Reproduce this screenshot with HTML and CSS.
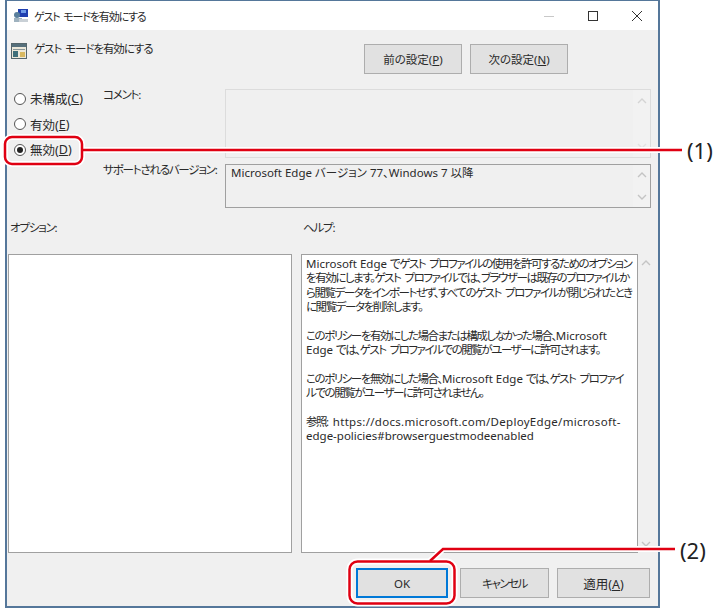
FILE: index.html
```html
<!DOCTYPE html>
<html lang="ja">
<head>
    <meta charset="UTF-8">
    <title>ゲスト モードを有効にする</title>
    <link rel="stylesheet" href="styles.css">
</head>
<body>

<div class="window">
    <div class="titlebar">
        <svg class="title-icon" width="16" height="16" viewBox="0 0 16 16">
            <rect x="5" y="1" width="10" height="8" fill="#1f3fb0"/>
            <rect x="8" y="2" width="5" height="3" fill="#6f9be8"/>
            <circle cx="4" cy="7" r="3" fill="#5a7f9c"/>
            <rect x="1" y="10" width="8" height="4" fill="#9fb2bf"/>
            <rect x="6" y="11" width="9" height="3" fill="#c9d0d6"/>
        </svg>
        <span class="title-text">ゲスト モードを有効にする</span>
        <div class="window-controls">
            <svg class="ctl-min" width="10" height="10" viewBox="0 0 10 10"><path d="M0 5.5h10" stroke="#c8c8c8" fill="none"/></svg>
            <svg class="ctl-max" width="10" height="10" viewBox="0 0 10 10"><rect x=".5" y=".5" width="9" height="9" stroke="#333" fill="none"/></svg>
            <svg class="ctl-close" width="10" height="10" viewBox="0 0 10 10"><path d="M0 0l10 10M10 0L0 10" stroke="#333" fill="none"/></svg>
        </div>
    </div>

    <div class="content">
        <div class="header-row">
            <svg class="policy-icon" width="16" height="16" viewBox="0 0 16 16">
                <rect x=".5" y=".5" width="15" height="15" fill="#ece8da" stroke="#55666c"/>
                <rect x="1" y="1" width="14" height="3" fill="#56707c"/>
                <rect x="2" y="6" width="12" height="1" fill="#8a979a"/>
                <rect x="2" y="8" width="5" height="6" fill="#3f6f7a"/>
                <rect x="9" y="9" width="5" height="5" fill="#d8b860"/>
            </svg>
            <span class="policy-name">ゲスト モードを有効にする</span>
            <div class="nav-buttons">
                <button class="btn btn-nav">前の設定(<u>P</u>)</button>
                <button class="btn btn-nav">次の設定(<u>N</u>)</button>
            </div>
        </div>

        <div class="settings">
            <div class="radios">
                <label class="radio"><span class="radio-dot"></span>未構成(<u>C</u>)</label>
                <label class="radio"><span class="radio-dot"></span>有効(<u>E</u>)</label>
                <label class="radio"><span class="radio-dot checked"></span>無効(<u>D</u>)</label>
            </div>
            <div class="field-label">コメント:</div>
            <div class="box box-comment">
                <div class="scroll">
                    <svg width="10" height="6" viewBox="0 0 10 6"><path d="M1 5l4-4 4 4" stroke="#d4d4d4" stroke-width="1.4" fill="none"/></svg>
                    <svg width="10" height="6" viewBox="0 0 10 6"><path d="M1 1l4 4 4-4" stroke="#e2e2e2" stroke-width="1.4" fill="none"/></svg>
                </div>
            </div>
            <div class="field-label">サポートされるバージョン:</div>
            <div class="box box-support">
                <span class="support-text">Microsoft Edge バージョン 77、Windows 7 以降</span>
                <div class="scroll scroll-short">
                    <svg width="10" height="6" viewBox="0 0 10 6"><path d="M1 5l4-4 4 4" stroke="#c4c4c4" stroke-width="1.4" fill="none"/></svg>
                    <svg width="10" height="6" viewBox="0 0 10 6"><path d="M1 1l4 4 4-4" stroke="#c4c4c4" stroke-width="1.4" fill="none"/></svg>
                </div>
            </div>
        </div>

        <div class="pane-labels">
            <div class="pane-label-left">オプション:</div>
            <div>ヘルプ:</div>
        </div>

        <div class="panes">
            <div class="pane-options"></div>
            <div class="pane-help">
                <div class="help-text">
                    <span class="en">Microsoft Edge </span>でゲスト プロファイルの使用を許可するためのオプション<br>
                    を有効にします。ゲスト プロファイルでは、ブラウザーは既存のプロファイルか<br>
                    ら閲覧データをインポートせず、すべてのゲスト プロファイルが閉じられたとき<br>
                    に閲覧データを削除します。<br>
                    <br>
                    このポリシーを有効にした場合または構成しなかった場合、<span class="en">Microsoft</span><br>
                    <span class="en">Edge </span>では、ゲスト プロファイルでの閲覧がユーザーに許可されます。<br>
                    <br>
                    このポリシーを無効にした場合、<span class="en">Microsoft Edge </span>では、ゲスト プロファイ<br>
                    ルでの閲覧がユーザーに許可されません。<br>
                    <br>
                    参照<span class="en url">: https://docs.microsoft.com/DeployEdge/microsoft-</span><br>
                    <span class="en">edge-policies#browserguestmodeenabled</span>
                </div>
                <div class="scroll scroll-help">
                    <svg width="10" height="6" viewBox="0 0 10 6"><path d="M1 5l4-4 4 4" stroke="#c4c4c4" stroke-width="1.4" fill="none"/></svg>
                    <svg width="10" height="6" viewBox="0 0 10 6"><path d="M1 1l4 4 4-4" stroke="#c4c4c4" stroke-width="1.4" fill="none"/></svg>
                </div>
            </div>
        </div>

        <div class="footer">
            <button class="btn btn-ok">OK</button>
            <button class="btn btn-cancel">キャンセル</button>
            <button class="btn btn-apply">適用(<u>A</u>)</button>
        </div>
    </div>
</div>

<!-- red callouts over the dialog -->
<svg class="callouts" width="717" height="609" viewBox="0 0 717 609">
    <g fill="none" stroke="#fff" stroke-width="6">
        <rect x="5" y="137" width="77" height="27" rx="7"/>
        <path d="M82 150H682"/>
        <rect x="349.5" y="561.5" width="105" height="42" rx="8"/>
        <path d="M430 561L443 549H675"/>
    </g>
    <g fill="none" stroke="#e00012" stroke-width="2.5">
        <rect x="5" y="137" width="77" height="27" rx="7"/>
        <path d="M82 150H682"/>
        <rect x="349.5" y="561.5" width="105" height="42" rx="8"/>
        <path d="M430 561L443 549H675"/>
    </g>
</svg>
<div class="callout-label label-1">(1)</div>
<div class="callout-label label-2">(2)</div>

</body>
</html>
```

FILE: styles.css
```css
body {
    margin: 0;
    padding-left: 5px;
    background: #fff;
    font-family: "Noto Sans", "Noto Sans CJK JP", sans-serif;
    font-size: 11.5px;
    font-feature-settings: "palt";
    color: #2a2a2a;
}
.window {
    width: 655px;
    height: 608px;
    box-sizing: border-box;
    border: 2px solid #55779a;
    border-top-width: 1px;
    background: #f0f0f0;
    display: flex;
    flex-direction: column;
    position: relative;
}
.titlebar {
    height: 29px;
    background: #fff;
    display: flex;
    align-items: center;
    padding-left: 6px;
}
.title-text {
    margin-left: 5px;
    font-size: 11px;
    letter-spacing: -1.15px;
    word-spacing: 2px;
}
.window-controls {
    margin-left: auto;
    display: flex;
    align-items: center;
    gap: 34px;
    padding-right: 16px;
}
.content {
    flex: 1;
    padding: 14px 7px 0 1px;
}
.header-row {
    display: flex;
    align-items: flex-start;
    height: 30px;
}
.policy-icon {
    margin: -1px 0 0 3px;
}
.policy-name {
    margin-left: 7px;
    margin-top: -1px;
    line-height: 12px;
    letter-spacing: -1.05px;
    word-spacing: 2px;
}
.nav-buttons {
    margin-left: auto;
    margin-right: 83px;
    display: flex;
    gap: 8px;
}
.btn {
    font: inherit;
    font-feature-settings: inherit;
    color: inherit;
    background: #e1e1e1;
    border: 1px solid #adadad;
    padding: 0;
    height: 30px;
}
.btn-nav {
    width: 98px;
}
.settings {
    margin-top: 15px;
    display: grid;
    grid-template-columns: 95px 122px 426px;
    grid-template-rows: 69px 44px;
    row-gap: 6px;
}
.radios {
    grid-row: 1 / 3;
    margin-top: -3px;
    padding-left: 6px;
    display: flex;
    flex-direction: column;
    font-size: 12.5px;
}
.radio {
    display: flex;
    align-items: center;
    height: 25.5px;
}
.radio-dot {
    width: 12px;
    height: 12px;
    box-sizing: border-box;
    border: 1px solid #555;
    border-radius: 50%;
    background: #fff;
    margin-right: 4px;
    position: relative;
}
.radio-dot.checked::after {
    content: "";
    position: absolute;
    left: 2px;
    top: 2px;
    width: 6px;
    height: 6px;
    border-radius: 50%;
    background: #222;
}
.field-label {
    line-height: 12px;
    white-space: nowrap;
    letter-spacing: -1.2px;
}
.box {
    box-sizing: border-box;
    display: flex;
    justify-content: space-between;
}
.box-comment {
    border: 1px solid #dcdcdc;
    justify-content: flex-end;
}
.box-support {
    border: 1px solid #a0a0a0;
    padding-left: 5px;
}
.support-text {
    line-height: 16px;
}
.scroll {
    width: 17px;
    display: flex;
    flex-direction: column;
    justify-content: space-between;
    align-items: center;
    padding: 8px 0;
    background: #f2f2f2;
}
.scroll-short {
    padding: 7px 0;
}
.pane-labels {
    margin-top: 12px;
    display: flex;
    line-height: 16px;
    letter-spacing: -1.2px;
}
.pane-label-left {
    width: 295px;
    padding-left: 2px;
    box-sizing: border-box;
}
.panes {
    margin-top: 18px;
    display: flex;
    gap: 9px;
    height: 299px;
}
.pane-options {
    flex: none;
    width: 284px;
    box-sizing: border-box;
    background: #fff;
    border: 1px solid #a0a0a0;
}
.pane-help {
    display: flex;
    flex: none;
}
.help-text {
    flex: none;
    width: 337px;
    box-sizing: border-box;
    background: #fff;
    border: 1px solid #a0a0a0;
    padding: 2px 4px;
    line-height: 14.33px;
    white-space: nowrap;
    letter-spacing: -1.45px;
    word-spacing: 2.5px;
}
.en {
    letter-spacing: 0;
    word-spacing: 0;
}
.url {
    letter-spacing: 0.3px;
}
.scroll-help {
    flex: none;
    width: 15px;
    padding: 6px 0;
    background: none;
}
.footer {
    margin-top: 15px;
    display: flex;
    justify-content: flex-end;
    padding-right: 1px;
}
.btn-ok {
    width: 92px;
    border: 2px solid #0078d7;
    margin-right: 12px;
}
.btn-cancel {
    width: 89px;
    margin-right: 8px;
    letter-spacing: -1.5px;
}
.btn-apply {
    width: 93px;
    font-size: 12.5px;
}
.callouts {
    position: absolute;
    left: 0;
    top: 0;
    pointer-events: none;
}
.callout-label {
    position: absolute;
    font-family: "Noto Sans", sans-serif;
    font-size: 22px;
    line-height: 24px;
    color: #222;
}
.label-1 {
    left: 687px;
    top: 138px;
}
.label-2 {
    left: 680px;
    top: 538px;
}
```
